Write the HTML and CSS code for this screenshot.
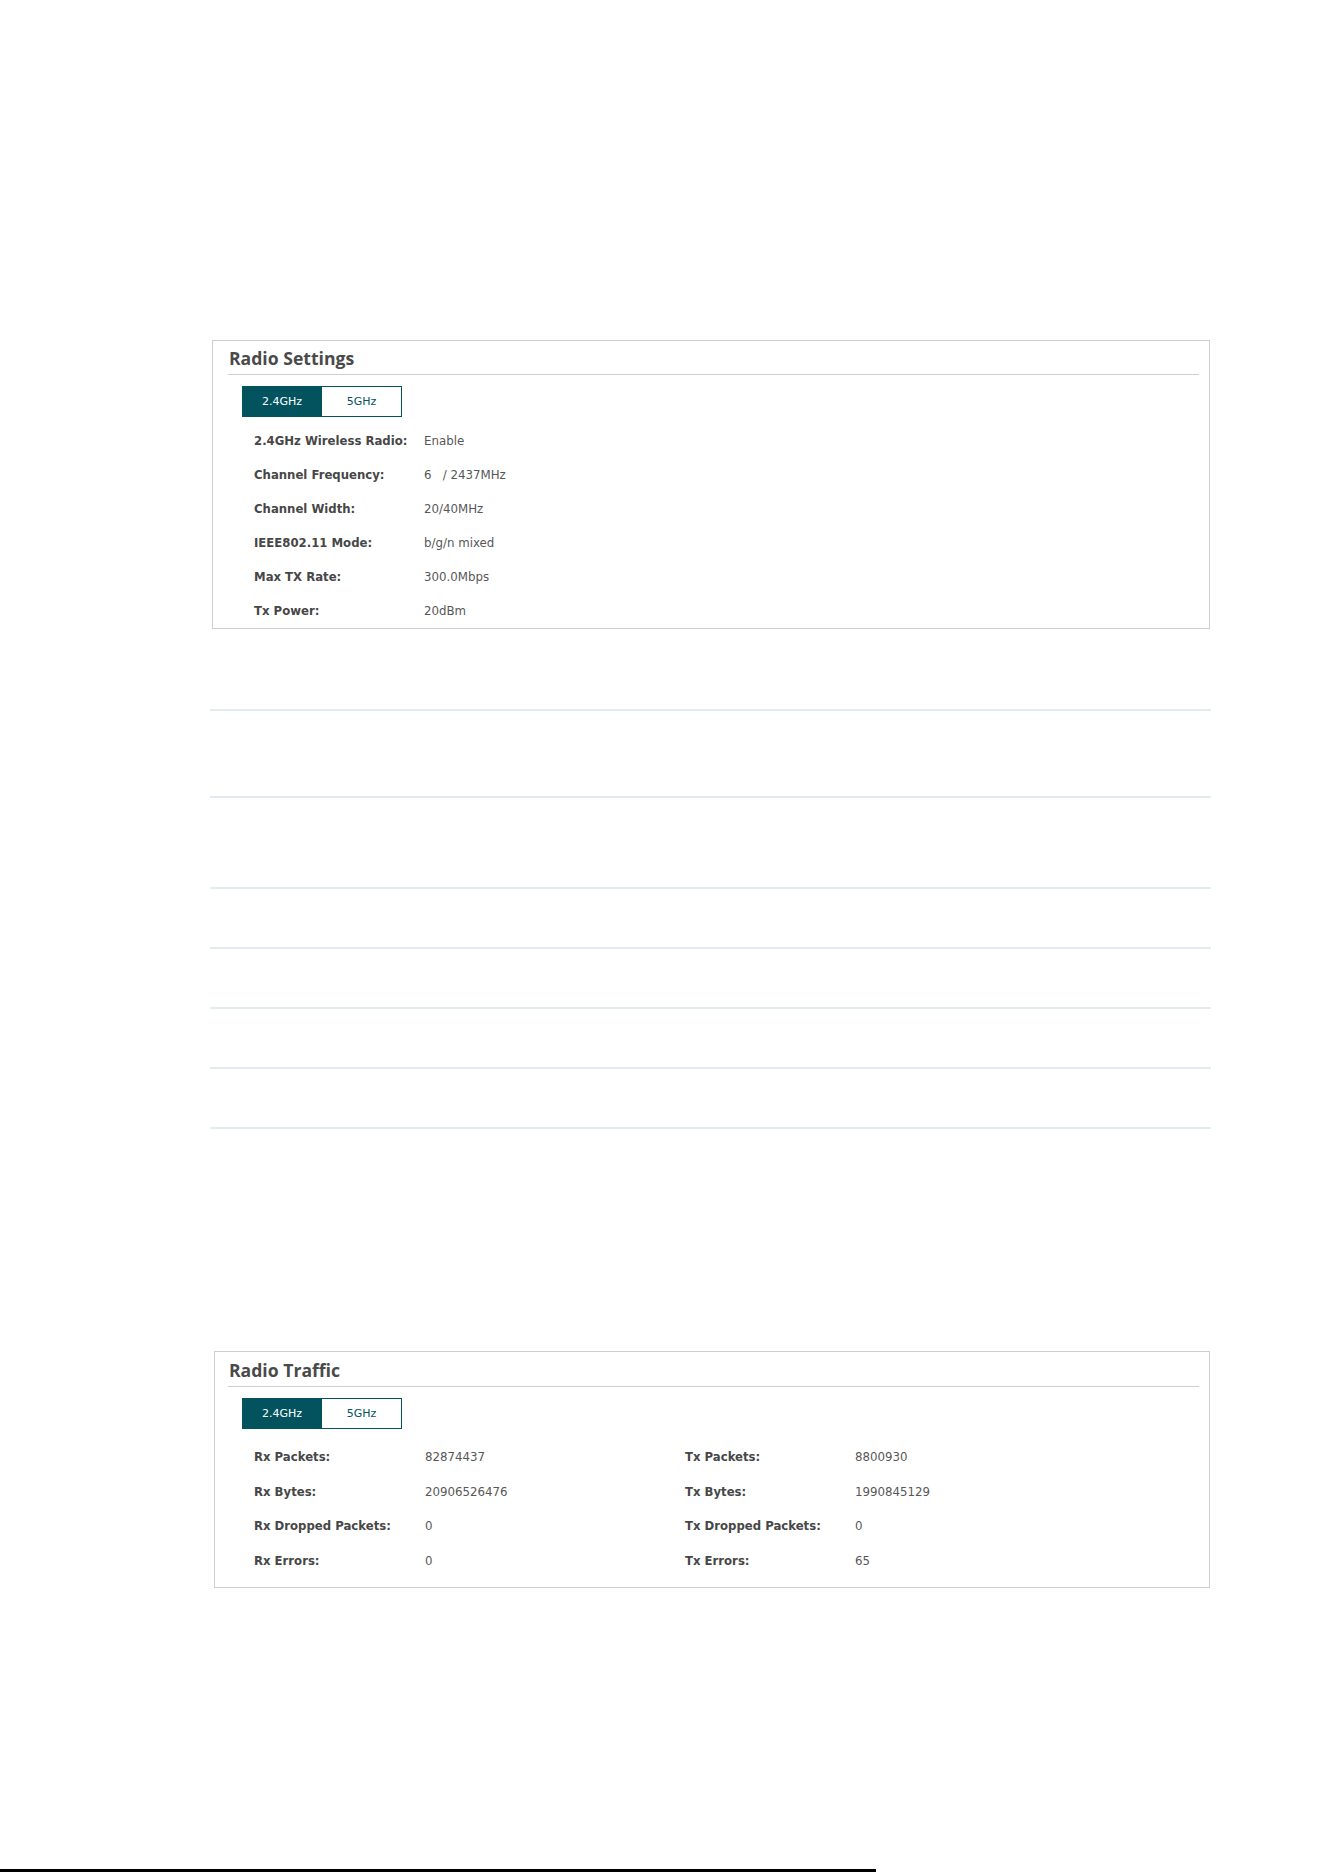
FILE: index.html
```html
<!DOCTYPE html>
<html lang="en">
<head>
  <meta charset="UTF-8" />
  <meta name="viewport" content="width=device-width, initial-scale=1.0" />
  <title>Radio Status</title>
  <link rel="stylesheet" href="styles.css">
</head>
<body>
  <div class="page">
    <section class="panel panel-settings">
      <h2 class="panel-title">Radio Settings</h2>
      <div class="tabs">
        <span class="tab active">2.4GHz</span>
        <span class="tab">5GHz</span>
      </div>
      <div class="info">
        <div class="info-row"><span class="label">2.4GHz Wireless Radio:</span><span class="value">Enable</span></div>
        <div class="info-row"><span class="label">Channel Frequency:</span><span class="value">6&nbsp;&nbsp;&nbsp;/ 2437MHz</span></div>
        <div class="info-row"><span class="label">Channel Width:</span><span class="value">20/40MHz</span></div>
        <div class="info-row"><span class="label">IEEE802.11 Mode:</span><span class="value">b/g/n mixed</span></div>
        <div class="info-row"><span class="label">Max TX Rate:</span><span class="value">300.0Mbps</span></div>
        <div class="info-row"><span class="label">Tx Power:</span><span class="value">20dBm</span></div>
      </div>
    </section>

    <!-- empty client table, rows only -->
    <div class="rules">
      <div class="rule rule-lg"></div>
      <div class="rule rule-xl"></div>
      <div class="rule rule-sm"></div>
      <div class="rule rule-sm"></div>
      <div class="rule rule-sm"></div>
      <div class="rule rule-sm"></div>
    </div>

    <section class="panel panel-traffic">
      <h2 class="panel-title">Radio Traffic</h2>
      <div class="tabs">
        <span class="tab active">2.4GHz</span>
        <span class="tab">5GHz</span>
      </div>
      <div class="traffic">
        <span class="label">Rx Packets:</span><span class="value">82874437</span>
        <span class="label">Tx Packets:</span><span class="value">8800930</span>
        <span class="label">Rx Bytes:</span><span class="value">20906526476</span>
        <span class="label">Tx Bytes:</span><span class="value">1990845129</span>
        <span class="label">Rx Dropped Packets:</span><span class="value">0</span>
        <span class="label">Tx Dropped Packets:</span><span class="value">0</span>
        <span class="label">Rx Errors:</span><span class="value">0</span>
        <span class="label">Tx Errors:</span><span class="value">65</span>
      </div>
    </section>
  </div>

  <footer class="page-foot">
    <div class="foot-bar"></div>
  </footer>
</body>
</html>
```

FILE: styles.css
```css
:root {
  --teal: #03535f;
  --border: #cfcfcf;
  --rule: #e2ebee;
  --label: #474747;
  --value: #575757;
}

html, body {
  margin: 0;
  padding: 0;
  background: #fff;
  font-family: 'DejaVu Sans', Verdana, sans-serif;
}

.page {
  width: 1000px;
  padding: 340px 0 0 210px;
}

.panel {
  border: 1px solid var(--border);
  margin-left: 2px;
  width: 998px;
  box-sizing: border-box;
}

.panel-title {
  margin: 0 10px 0 15px;
  padding: 6px 0 0 1px;
  height: 27px;
  border-bottom: 1px solid var(--border);
  font-family: 'Open Sans', sans-serif;
  font-size: 17.6px;
  font-weight: 700;
  line-height: 22px;
  color: #4a4a4a;
}

.tabs {
  display: flex;
  margin: 11px 0 0 29px;
}

.tab {
  box-sizing: border-box;
  width: 80px;
  height: 31px;
  line-height: 29px;
  text-align: center;
  font-size: 11px;
  color: var(--teal);
  border: 1px solid var(--teal);
  border-left: none;
}

.tab.active {
  width: 80px;
  background: var(--teal);
  color: #fff;
  border-left: 1px solid var(--teal);
}

.info {
  margin-top: 7px;
  padding-left: 41px;
}

.info-row {
  display: flex;
  height: 34px;
  align-items: center;
}

.label {
  font-size: 11.7px;
  font-weight: 700;
  color: var(--label);
}

.value {
  font-size: 11.8px;
  color: var(--value);
}

.info-row .label {
  width: 170px;
}

/* table lines between the panels */
.rules {
  margin-top: 80px;
  width: 1001px;
}

.rule {
  border-top: 2px solid var(--rule);
}

.rule:last-child {
  border-bottom: 2px solid var(--rule);
}

.rule-lg { height: 85px; }
.rule-xl { height: 89px; }
.rule-sm { height: 58px; }

.panel-traffic {
  margin-top: 222px;
  margin-left: 4px;
  width: 996px;
}

.panel-traffic .panel-title {
  margin-left: 13px;
  padding-top: 7px;
  height: 27px;
}

.panel-traffic .tabs {
  margin-left: 27px;
}

.traffic {
  display: grid;
  grid-template-columns: 171px 260px 170px 1fr;
  grid-auto-rows: 34.5px;
  align-items: center;
  margin-top: 11px;
  padding: 0 0 9px 39px;
}

.page-foot {
  position: absolute;
  left: 0;
  top: 1869px;
  width: 100%;
}

.foot-bar {
  width: 876px;
  height: 3px;
  background: #000;
}
```
